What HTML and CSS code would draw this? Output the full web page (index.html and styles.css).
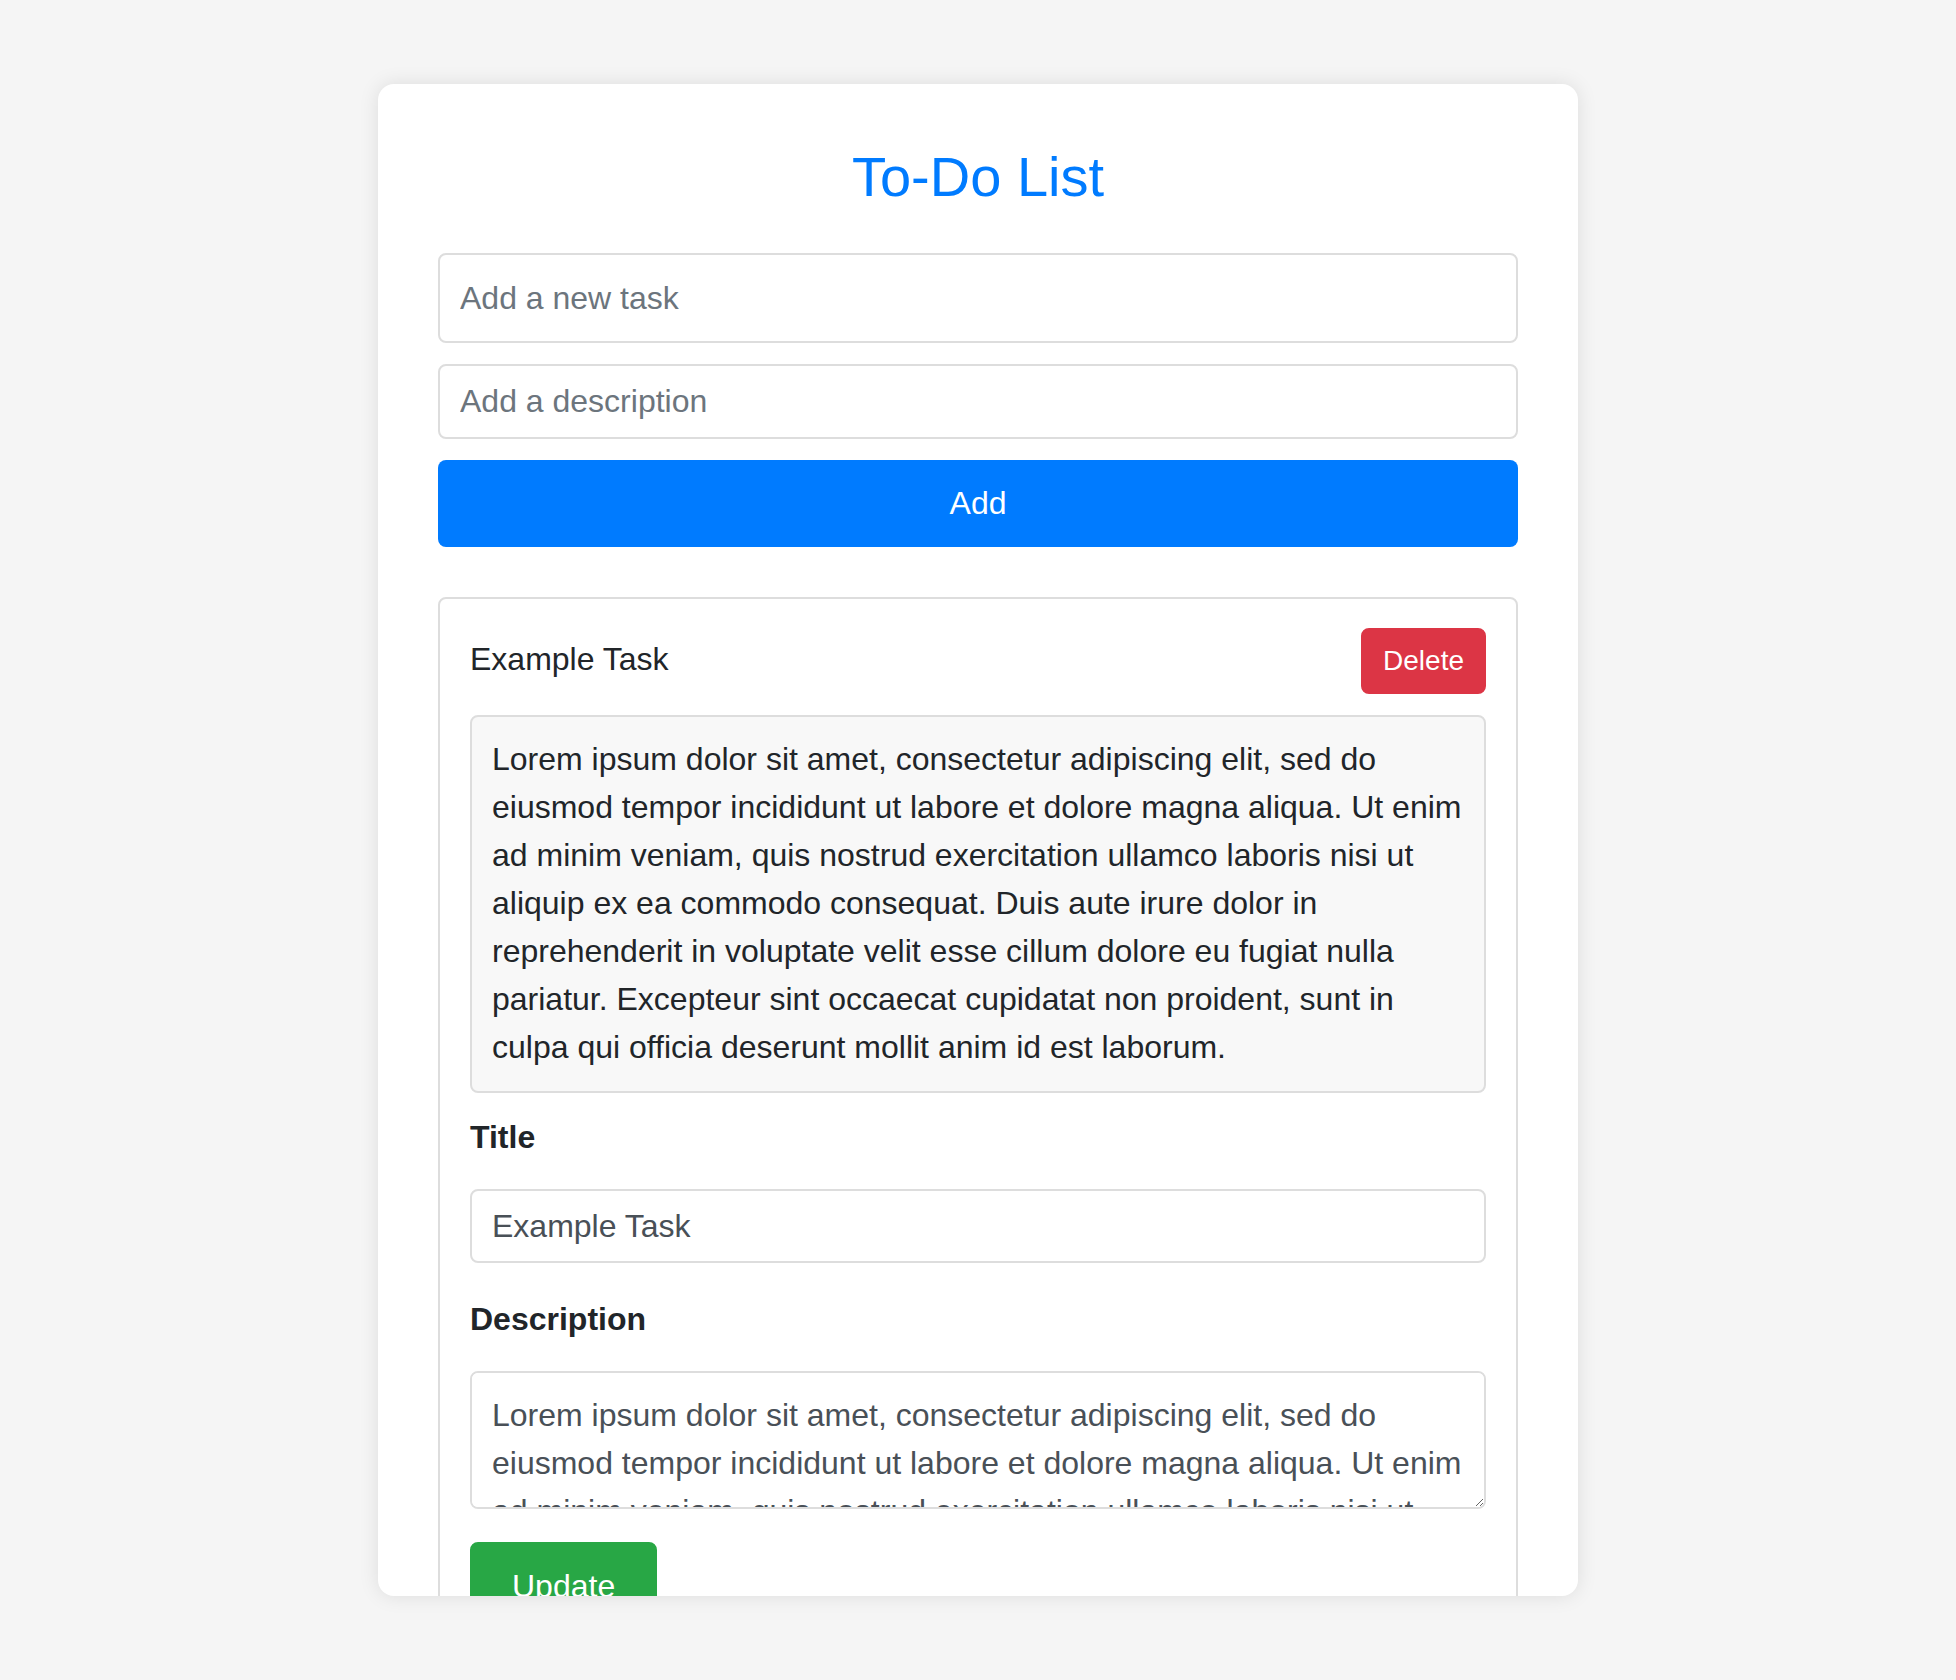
FILE: index.html
```html
<!DOCTYPE html>
<html lang="en">
<head>
<meta charset="utf-8">
<title>To-Do List</title>
<link rel="stylesheet" href="styles.css">
</head>
<body>
<main class="card">
  <h1 class="title">To-Do List</h1>
  <form class="new-task">
    <input class="field field-task" type="text" placeholder="Add a new task">
    <input class="field field-desc" type="text" placeholder="Add a description">
    <button class="btn btn-add" type="button">Add</button>
  </form>
  <ul class="task-list">
    <li class="task">
      <div class="task-head">
        <span class="task-name">Example Task</span>
        <button class="btn btn-delete" type="button">Delete</button>
      </div>
      <p class="task-desc">Lorem ipsum dolor sit amet, consectetur adipiscing elit, sed do eiusmod tempor incididunt ut labore et dolore magna aliqua. Ut enim ad minim veniam, quis nostrud exercitation ullamco laboris nisi ut aliquip ex ea commodo consequat. Duis aute irure dolor in reprehenderit in voluptate velit esse cillum dolore eu fugiat nulla pariatur. Excepteur sint occaecat cupidatat non proident, sunt in culpa qui officia deserunt mollit anim id est laborum.</p>
      <form class="edit">
        <label class="edit-label" for="t1">Title</label>
        <input class="edit-input" id="t1" type="text" value="Example Task">
        <label class="edit-label" for="d1">Description</label>
        <textarea class="edit-area" id="d1">Lorem ipsum dolor sit amet, consectetur adipiscing elit, sed do eiusmod tempor incididunt ut labore et dolore magna aliqua. Ut enim ad minim veniam, quis nostrud exercitation ullamco laboris nisi ut aliquip ex ea commodo consequat. Duis aute irure dolor in reprehenderit in voluptate velit esse cillum dolore eu fugiat nulla pariatur. Excepteur sint occaecat cupidatat non proident, sunt in culpa qui officia deserunt mollit anim id est laborum.</textarea>
        <button class="btn btn-update" type="button">Update</button>
      </form>
    </li>
  </ul>
</main>
</body>
</html>
```

FILE: styles.css
```css
* {
  box-sizing: border-box;
}

html, body {
  margin: 0;
  padding: 0;
}

body {
  height: 100vh;
  background: #f5f5f5;
  font-family: "Liberation Sans", Arial, sans-serif;
  color: #212529;
  display: flex;
  align-items: center;
  justify-content: center;
}

.card {
  width: 1200px;
  max-height: 90vh;
  height: 90vh;
  overflow: hidden;
  background: #ffffff;
  border-radius: 16px;
  box-shadow: 0 0 20px rgba(0, 0, 0, 0.1);
  padding: 60px;
}

.title {
  margin: 0 0 43px;
  font-size: 56px;
  font-weight: normal;
  line-height: 66px;
  text-align: center;
  color: #007bff;
}

.new-task {
  display: flex;
  flex-direction: column;
  gap: 21px;
}

.field {
  display: block;
  width: 100%;
  margin: 0;
  padding: 0 20px;
  border: 2px solid #dddddd;
  border-radius: 8px;
  font-family: inherit;
  font-size: 32px;
  color: #495057;
  background: #ffffff;
  outline: none;
}

.field::placeholder,
.edit-input::placeholder {
  color: #6c757d;
}

.field-task {
  height: 90px;
}

.field-desc {
  height: 75px;
}

.btn {
  font-family: inherit;
  color: #ffffff;
  border-radius: 8px;
  cursor: pointer;
  line-height: normal;
}

.btn-add {
  height: 87px;
  width: 100%;
  border: none;
  background: #007bff;
  font-size: 32px;
}

.task-list {
  list-style: none;
  margin: 50px 0 0;
  padding: 0;
}

.task {
  border: 2px solid #dddddd;
  border-radius: 8px;
  padding: 29px 30px 30px;
  background: #ffffff;
}

.task-head {
  display: flex;
  align-items: baseline;
  justify-content: space-between;
}

.task-name {
  font-size: 32px;
  color: #212529;
}

.btn-delete {
  background: #dc3545;
  border: 2px solid #dc3545;
  font-size: 28px;
  padding: 15px 20px;
}

.task-desc {
  margin: 21px 0 0;
  padding: 18px 20px 20px;
  background: #f8f8f8;
  border: 2px solid #dddddd;
  border-radius: 8px;
  font-size: 32px;
  line-height: 48px;
  color: #212529;
}

.edit {
  display: flex;
  flex-direction: column;
  align-items: flex-start;
  margin-top: 20px;
}

.edit-label {
  display: block;
  font-size: 32px;
  font-weight: bold;
  line-height: 48px;
  margin-bottom: 28px;
  color: #212529;
}

.edit-input {
  display: block;
  width: 100%;
  height: 74px;
  margin: 0 0 32px;
  padding: 0 20px;
  border: 2px solid #dddddd;
  border-radius: 8px;
  font-family: inherit;
  font-size: 32px;
  color: #495057;
  outline: none;
}

.edit-area {
  display: block;
  width: 100%;
  height: 138px;
  margin: 0 0 33px;
  padding: 18px 20px 16px;
  border: 2px solid #dddddd;
  border-radius: 8px;
  font-family: inherit;
  font-size: 32px;
  line-height: 48px;
  color: #495057;
  resize: vertical;
  outline: none;
}

.btn-update {
  background: #28a745;
  border: 2px solid #28a745;
  font-size: 32px;
  padding: 24px 40px;
}
```
